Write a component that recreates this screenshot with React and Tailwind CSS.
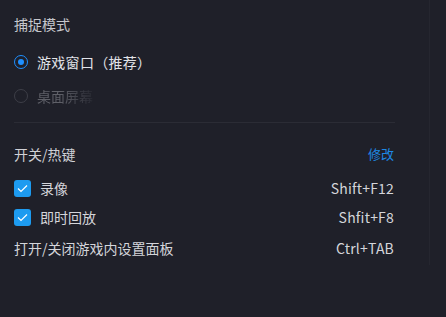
import React from 'react';

const Check = () => (
  <span className="flex h-[17px] w-[17px] items-center justify-center rounded-[3px] bg-[#1d9bf0]">
    <svg width="11" height="9" viewBox="0 0 11 9" fill="none">
      <path d="M1 4.5 L4 7.5 L10 1.5" stroke="#ffffff" strokeWidth="1.2" />
    </svg>
  </span>
);

const App = () => {
  return (
    <div
      className="relative h-[317px] w-[446px] overflow-hidden bg-[#1f2029] text-[14px] text-[#d4d5da]"
      style={{ fontFamily: '"Noto Sans CJK SC", "Noto Sans", sans-serif' }}
    >
      <div className="absolute right-[16px] top-0 h-[265px] w-px bg-[#25262f]" />
      <div className="w-[395px] pl-[14px] pt-[13px]">
        <div className="h-[22px] leading-[22px] text-[#c6c7cc]">捕捉模式</div>

        <div className="mt-[16px] flex h-[22px] items-center gap-[9px]">
          <span className="flex h-[14px] w-[14px] items-center justify-center rounded-full border border-[#1e8fff]">
            <span className="h-[6px] w-[6px] rounded-full bg-[#1e8fff]" />
          </span>
          <span className="leading-[22px] tracking-[0.3px] text-[#e2e3e8]">游戏窗口（推荐）</span>
        </div>

        <div className="mt-[12px] flex h-[22px] items-center gap-[9px] opacity-40">
          <span className="h-[14px] w-[14px] rounded-full border border-[#6b6c74]" />
          <span className="bg-gradient-to-r from-[#c0c1c8] from-40% to-[#3a3b44] bg-clip-text leading-[22px] text-transparent">
            桌面屏幕
          </span>
        </div>

        <div className="mt-[15px] h-px bg-[#2b2c35]" />

        <div className="mt-[20px] flex h-[22px] items-center justify-between pr-px">
          <span className="text-[#d0d1d6]">开关/热键</span>
          <span className="text-[13px] text-[#1e88e5]">修改</span>
        </div>

        <div className="mt-[12px] flex h-[22px] items-center justify-between pr-px">
          <div className="flex items-center gap-[9px]">
            <Check />
            <span>录像</span>
          </div>
          <span className="tracking-[0.2px]">Shift+F12</span>
        </div>

        <div className="mt-[7px] flex h-[22px] items-center justify-between pr-px">
          <div className="flex items-center gap-[9px]">
            <Check />
            <span>即时回放</span>
          </div>
          <span className="tracking-[0.2px]">Shfit+F8</span>
        </div>

        <div className="mt-[9px] flex h-[22px] items-center justify-between pr-px">
          <span>打开/关闭游戏内设置面板</span>
          <span className="tracking-[0.2px]">Ctrl+TAB</span>
        </div>
      </div>
    </div>
  );
};

export default App;
